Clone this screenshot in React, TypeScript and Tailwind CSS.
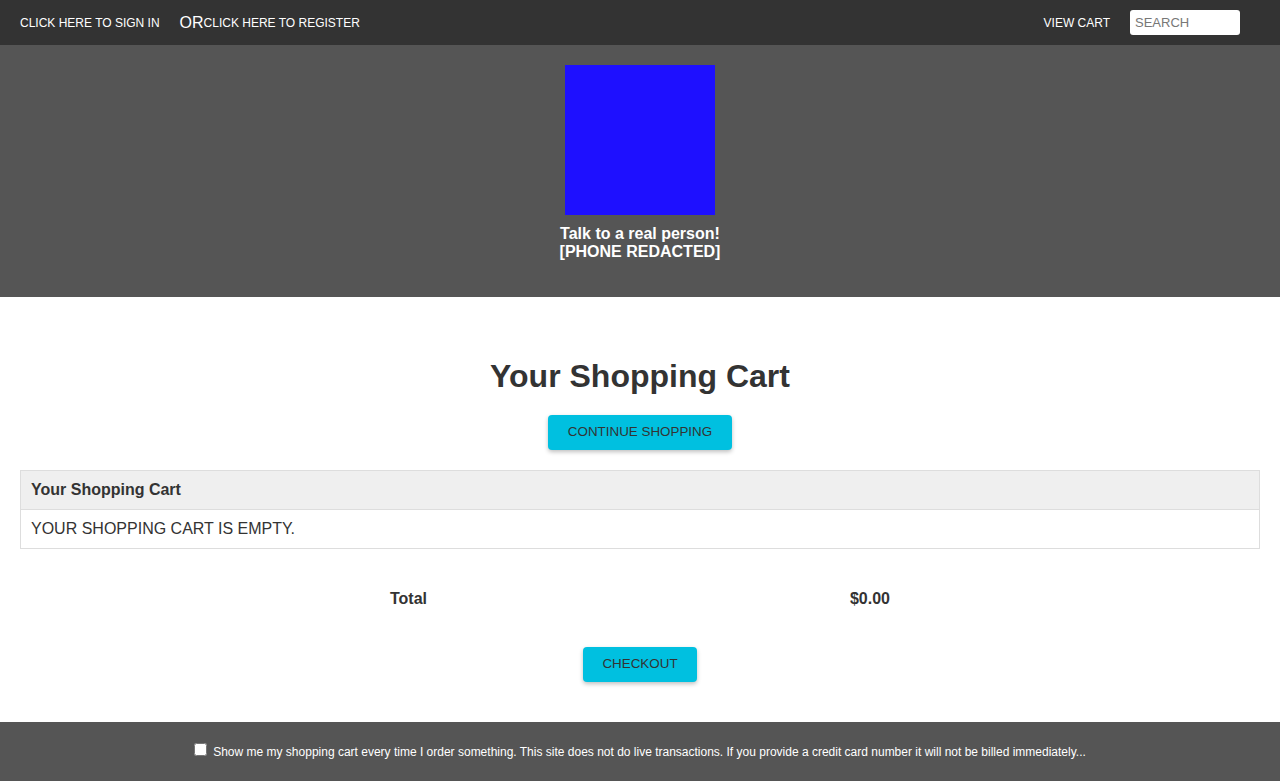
import React from "react";

export default function App() {
  return (
    <div className="min-h-[781px] flex flex-col bg-white text-[#333]" style={{ fontFamily: '"Liberation Sans", Arial, sans-serif' }}>
      <div className="h-[45px] bg-[#333] flex items-center px-[20px] text-white">
        <span className="text-[12px]">CLICK HERE TO SIGN IN</span>
        <span className="text-[16px] ml-[20px]">OR</span>
        <span className="text-[12px]">CLICK HERE TO REGISTER</span>
        <span className="flex-1" />
        <span className="text-[12px]">VIEW CART</span>
        <input
          placeholder="SEARCH"
          className="ml-[20px] mr-[20px] w-[110px] h-[25px] rounded-[3px] bg-white px-[5px] text-[13px] text-[#333] placeholder:text-[#777] outline-none"
        />
      </div>
      <div className="h-[252px] bg-[#555] flex flex-col items-center pt-[20px]">
        <div className="w-[150px] h-[150px] bg-[#1e10ff]" />
        <div className="mt-[10px] text-white font-bold text-[16px] leading-[18px] text-center">
          <div>Talk to a real person!</div>
          <div>[PHONE REDACTED]</div>
        </div>
      </div>
      <div className="flex-1 flex flex-col items-center px-[20px]">
        <h1 className="mt-[60px] text-[32px] leading-[38px] font-bold">Your Shopping Cart</h1>
        <button className="mt-[20px] h-[35px] w-[184px] rounded-[4px] bg-[#00c0e0] text-[13.4px] text-[#333] shadow-[0_2px_4px_rgba(0,0,0,0.25)]">
          CONTINUE SHOPPING
        </button>
        <div className="mt-[20px] w-full border border-[#ddd]">
          <div className="h-[39px] bg-[#efefef] border-b border-[#ddd] px-[10px] flex items-center font-bold text-[16px]">
            Your Shopping Cart
          </div>
          <div className="h-[38px] px-[10px] flex items-center text-[16px]">YOUR SHOPPING CART IS EMPTY.</div>
        </div>
        <div className="mt-[40px] w-[500px] flex justify-between font-bold text-[16px] leading-[20px]">
          <span>Total</span>
          <span>$0.00</span>
        </div>
        <button className="mt-[38px] h-[35px] w-[114px] rounded-[4px] bg-[#00c0e0] text-[13.4px] text-[#333] shadow-[0_2px_4px_rgba(0,0,0,0.25)]">
          CHECKOUT
        </button>
        <div className="h-[40px]" />
      </div>
      <div className="h-[59px] bg-[#555] flex items-center justify-center text-white">
        <input type="checkbox" className="w-[13px] h-[13px] mr-[6px] -mt-[4px]" />
        <span className="text-[12px]">
          Show me my shopping cart every time I order something. This site does not do live transactions. If you provide a credit card number it will not be billed immediately...
        </span>
      </div>
    </div>
  );
}
